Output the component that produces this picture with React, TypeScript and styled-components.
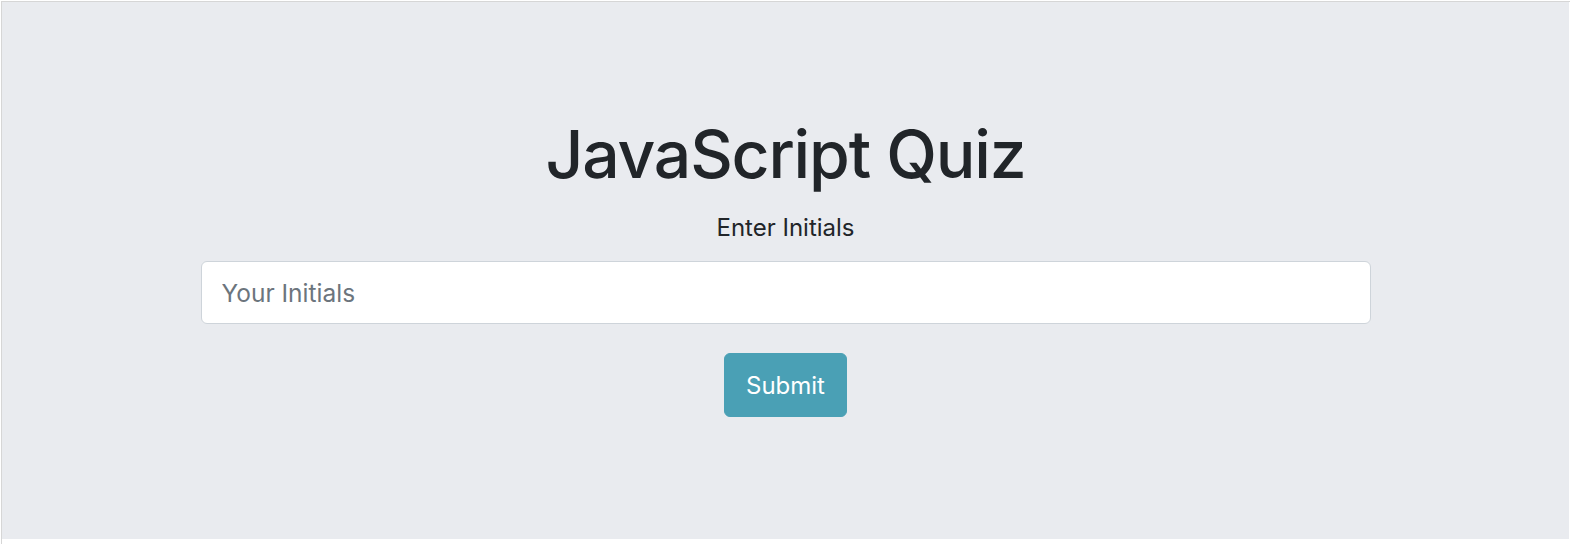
import React from "react";
import styled, { createGlobalStyle } from "styled-components";

const GlobalStyle = createGlobalStyle`
  html, body {
    margin: 0;
    padding: 0;
    background: #ffffff;
    font-family: Inter, "Helvetica Neue", Arial, sans-serif;
    color: #212529;
  }
  * { box-sizing: border-box; }
`;

const Frame = styled.div`
  margin: 1px 0 0 1px;
  border-top: 1px solid #d6d6d6;
  border-left: 1px solid #d6d6d6;
  height: 543px;
`;

const Jumbotron = styled.section`
  height: 537px;
  margin-right: 1px;
  background: #e9ebef;
  display: flex;
  flex-direction: column;
  align-items: center;
  padding-top: 110px;
`;

const Container = styled.div`
  width: 1170px;
  display: flex;
  flex-direction: column;
  align-items: center;
`;

const Title = styled.h1`
  margin: 0;
  font-size: 66px;
  font-weight: 500;
  line-height: 84px;
  letter-spacing: -1.2px;
`;

const Form = styled.form`
  width: 100%;
  display: flex;
  flex-direction: column;
  align-items: center;
`;

const Label = styled.label`
  margin-top: 14px;
  font-size: 24px;
  line-height: 36px;
  font-weight: 400;
`;

const Input = styled.input`
  margin-top: 15px;
  width: 100%;
  height: 63px;
  padding: 0 20px;
  font-family: inherit;
  font-size: 24.5px;
  color: #495057;
  background: #fff;
  border: 1px solid #ced4da;
  border-radius: 6px;
  outline: none;
  &::placeholder { color: #6c757d; }
`;

const Button = styled.button`
  margin-top: 29px;
  height: 64px;
  padding: 0 21px;
  font-family: inherit;
  font-size: 24px;
  font-weight: 400;
  color: #fff;
  background: #4aa0b5;
  border: 1px solid #4aa0b5;
  border-radius: 6px;
  cursor: pointer;
`;

export default function App() {
  return (
    <>
      <GlobalStyle />
      <Frame>
        <Jumbotron>
          <Container>
            <Title>JavaScript Quiz</Title>
            <Form onSubmit={(e) => e.preventDefault()}>
              <Label htmlFor="initials">Enter Initials</Label>
              <Input id="initials" type="text" placeholder="Your Initials" />
              <Button type="submit">Submit</Button>
            </Form>
          </Container>
        </Jumbotron>
      </Frame>
    </>
  );
}
